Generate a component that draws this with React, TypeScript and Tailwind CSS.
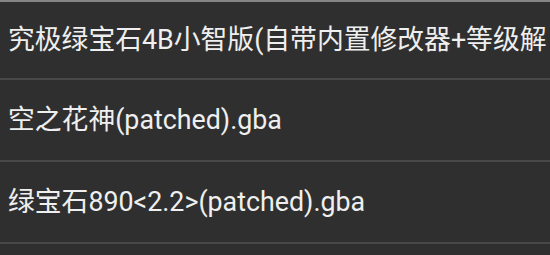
export default function App() {
  const items = [
    "究极绿宝石4B小智版(自带内置修改器+等级解",
    "空之花神(patched).gba",
    "绿宝石890<2.2>(patched).gba",
  ];
  const row =
    "shrink-0 flex items-center pl-[8px] border-b-2 border-[#484848] text-[26.8px] text-[#efefef] whitespace-nowrap overflow-hidden";
  return (
    <div
      className="w-[550px] h-[255px] overflow-hidden bg-[#2f2f2f] border-t-2 border-[#858585]"
      style={{ fontFamily: 'Roboto, "Noto Sans CJK SC", sans-serif' }}
    >
      <div className="flex flex-col">
        <div className={`h-[78px] ${row}`}>{items[0]}</div>
        <div className={`h-[82px] ${row}`}>{items[1]}</div>
        <div className={`h-[82px] ${row}`}>{items[2]}</div>
        <div className="h-[40px] shrink-0" />
      </div>
    </div>
  );
}
